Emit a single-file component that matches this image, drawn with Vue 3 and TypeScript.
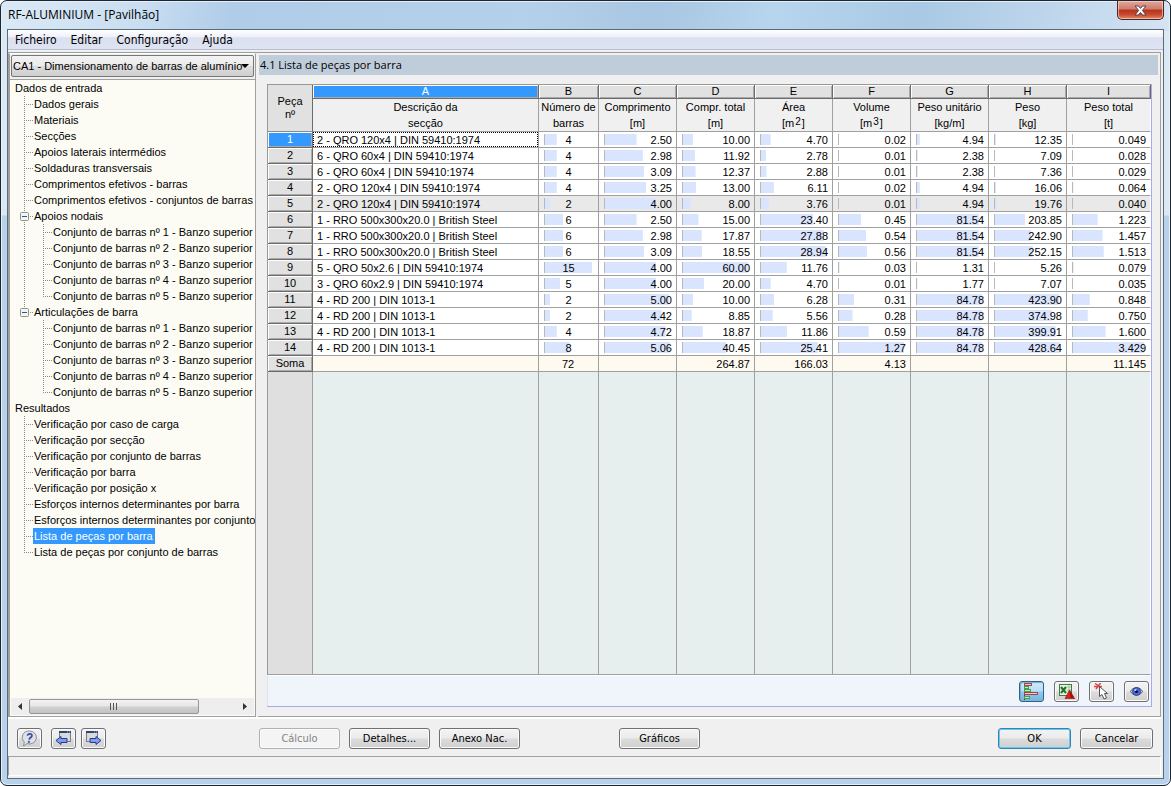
<script setup lang="ts">
import { ref } from 'vue'

interface TreeItem {
  label: string
  children?: TreeItem[]
}

interface Column {
  letter: string
  title: string
  unit: string
  power?: string
  kind: string
}

interface Piece {
  name: string
  values: string[]
}

const beams = [1, 2, 3, 4, 5].map((n) => ({ label: `Conjunto de barras nº ${n} - Banzo superior` }))

const tree: TreeItem[] = [
  {
    label: 'Dados de entrada',
    children: [
      { label: 'Dados gerais' },
      { label: 'Materiais' },
      { label: 'Secções' },
      { label: 'Apoios laterais intermédios' },
      { label: 'Soldaduras transversais' },
      { label: 'Comprimentos efetivos - barras' },
      { label: 'Comprimentos efetivos - conjuntos de barras' },
      { label: 'Apoios nodais', children: beams },
      { label: 'Articulações de barra', children: beams },
    ],
  },
  {
    label: 'Resultados',
    children: [
      { label: 'Verificação por caso de carga' },
      { label: 'Verificação por secção' },
      { label: 'Verificação por conjunto de barras' },
      { label: 'Verificação por barra' },
      { label: 'Verificação por posição x' },
      { label: 'Esforços internos determinantes por barra' },
      { label: 'Esforços internos determinantes por conjunto' },
      { label: 'Lista de peças por barra' },
      { label: 'Lista de peças por conjunto de barras' },
    ],
  },
]

const columns: Column[] = [
  { letter: 'A', title: 'Descrição da', unit: 'secção', kind: 'name' },
  { letter: 'B', title: 'Número de', unit: 'barras', kind: 'count' },
  { letter: 'C', title: 'Comprimento', unit: 'm', kind: 'num' },
  { letter: 'D', title: 'Compr. total', unit: 'm', kind: 'num' },
  { letter: 'E', title: 'Área', unit: 'm', power: '2', kind: 'num' },
  { letter: 'F', title: 'Volume', unit: 'm', power: '3', kind: 'num' },
  { letter: 'G', title: 'Peso unitário', unit: 'kg/m', kind: 'num' },
  { letter: 'H', title: 'Peso', unit: 'kg', kind: 'num' },
  { letter: 'I', title: 'Peso total', unit: 't', kind: 'last' },
]

const pieces: Piece[] = [
  { name: '2 - QRO 120x4 | DIN 59410:1974', values: ['4', '2.50', '10.00', '4.70', '0.02', '4.94', '12.35', '0.049'] },
  { name: '6 - QRO 60x4 | DIN 59410:1974', values: ['4', '2.98', '11.92', '2.78', '0.01', '2.38', '7.09', '0.028'] },
  { name: '6 - QRO 60x4 | DIN 59410:1974', values: ['4', '3.09', '12.37', '2.88', '0.01', '2.38', '7.36', '0.029'] },
  { name: '2 - QRO 120x4 | DIN 59410:1974', values: ['4', '3.25', '13.00', '6.11', '0.02', '4.94', '16.06', '0.064'] },
  { name: '2 - QRO 120x4 | DIN 59410:1974', values: ['2', '4.00', '8.00', '3.76', '0.01', '4.94', '19.76', '0.040'] },
  { name: '1 - RRO 500x300x20.0 | British Steel', values: ['6', '2.50', '15.00', '23.40', '0.45', '81.54', '203.85', '1.223'] },
  { name: '1 - RRO 500x300x20.0 | British Steel', values: ['6', '2.98', '17.87', '27.88', '0.54', '81.54', '242.90', '1.457'] },
  { name: '1 - RRO 500x300x20.0 | British Steel', values: ['6', '3.09', '18.55', '28.94', '0.56', '81.54', '252.15', '1.513'] },
  { name: '5 - QRO 50x2.6 | DIN 59410:1974', values: ['15', '4.00', '60.00', '11.76', '0.03', '1.31', '5.26', '0.079'] },
  { name: '3 - QRO 60x2.9 | DIN 59410:1974', values: ['5', '4.00', '20.00', '4.70', '0.01', '1.77', '7.07', '0.035'] },
  { name: '4 - RD 200 | DIN 1013-1', values: ['2', '5.00', '10.00', '6.28', '0.31', '84.78', '423.90', '0.848'] },
  { name: '4 - RD 200 | DIN 1013-1', values: ['2', '4.42', '8.85', '5.56', '0.28', '84.78', '374.98', '0.750'] },
  { name: '4 - RD 200 | DIN 1013-1', values: ['4', '4.72', '18.87', '11.86', '0.59', '84.78', '399.91', '1.600'] },
  { name: '4 - RD 200 | DIN 1013-1', values: ['8', '5.06', '40.45', '25.41', '1.27', '84.78', '428.64', '3.429'] },
]

const sums = ['', '72', '', '264.87', '166.03', '4.13', '', '', '11.145']
const maxima = sums.slice(1).map((_, i) => Math.max(...pieces.map((p) => Number(p.values[i]))))

const menus = ['Ficheiro', 'Editar', 'Configuração', 'Ajuda']
const current = ref('Lista de peças por barra')
const collapsed = ref<string[]>([])
const activeRow = ref(0)
const loadCase = ref('CA1')

function toggle(label: string) {
  collapsed.value = collapsed.value.includes(label)
    ? collapsed.value.filter((l) => l !== label)
    : [...collapsed.value, label]
}

function share(value: string, column: number) {
  return `${(Number(value) / maxima[column]) * 100}% 100%`
}
</script>

<template>
  <div class="window">
    <header class="titlebar">
      <h1>RF-ALUMINIUM - [Pavilhão]</h1>
      <button class="close" type="button" aria-label="Fechar">
        <svg width="13" height="11" viewBox="0 0 13 11">
          <path d="M1 1h3.4l2.1 2.4L8.6 1H12L8.4 5.4 12 10H8.6L6.5 7.500 4.400 10H1l3.600-4.600z" fill="#fff" stroke="#55404a" />
        </svg>
      </button>
    </header>

    <div class="client">
      <nav class="menubar">
        <button v-for="m in menus" :key="m" type="button">{{ m }}</button>
      </nav>

      <div class="main">
        <aside class="sidebar">
          <div class="combo">
            <select v-model="loadCase" aria-label="Caso de dimensionamento">
              <option value="CA1">CA1 - Dimensionamento de barras de alumínio</option>
            </select>
            <span class="arrow"></span>
          </div>
          <div class="navigator">
            <ul class="tree">
              <li v-for="root in tree" :key="root.label">
                <span class="root">{{ root.label }}</span>
                <ul class="branch">
                  <li v-for="item in root.children" :key="item.label">
                    <div class="line">
                      <button
                        v-if="item.children"
                        class="expander"
                        type="button"
                        :aria-label="item.label"
                        :aria-expanded="!collapsed.includes(item.label)"
                        @click="toggle(item.label)"
                      >
                        <svg width="9" height="9" viewBox="0 0 9 9">
                          <rect x=".5" y=".5" width="8" height="8" rx="1" fill="#f4f4f0" stroke="#919191" />
                          <path d="M2 4.500h5" stroke="#3450a0" />
                          <path v-if="collapsed.includes(item.label)" d="M4.500 2v5" stroke="#3450a0" />
                        </svg>
                      </button>
                      <button class="node" :class="{ on: item.label === current }" type="button" @click="current = item.label">
                        {{ item.label }}
                      </button>
                    </div>
                    <ul v-if="item.children && !collapsed.includes(item.label)" class="branch">
                      <li v-for="leaf in item.children" :key="leaf.label">
                        <div class="line">
                          <button class="node" type="button">{{ leaf.label }}</button>
                        </div>
                      </li>
                    </ul>
                  </li>
                </ul>
              </li>
            </ul>
            <div class="scroll">
              <button type="button" aria-label="Deslocar para a esquerda">
                <svg width="4" height="7" viewBox="0 0 4 7"><path d="M4 0v7L0 3.500z" fill="#333" /></svg>
              </button>
              <div class="track">
                <div class="thumb"><i></i><i></i><i></i></div>
              </div>
              <button type="button" aria-label="Deslocar para a direita">
                <svg width="4" height="7" viewBox="0 0 4 7"><path d="M0 0v7l4-3.500z" fill="#333" /></svg>
              </button>
            </div>
          </div>
        </aside>

        <section class="panel">
          <h2>4.1 Lista de peças por barra</h2>
          <div class="sheet">
            <table>
              <colgroup>
                <col class="w-head" />
                <col v-for="c in columns" :key="c.letter" :class="'w-' + c.kind" />
              </colgroup>
              <thead>
                <tr class="letters">
                  <th rowspan="2" class="corner">Peça<br />nº</th>
                  <th v-for="c in columns" :key="c.letter" :class="{ active: c.letter === 'A' }">{{ c.letter }}</th>
                </tr>
                <tr class="titles">
                  <th v-for="c in columns" :key="c.letter">
                    {{ c.title }}<br />
                    <template v-if="c.kind === 'name' || c.kind === 'count'">{{ c.unit }}</template>
                    <template v-else>[{{ c.unit }}<sup v-if="c.power">{{ c.power }}</sup>]</template>
                  </th>
                </tr>
              </thead>
              <tbody>
                <tr v-for="(p, i) in pieces" :key="i" :class="{ shaded: i === 4, active: i === activeRow }" @click="activeRow = i">
                  <th scope="row">{{ i + 1 }}</th>
                  <td class="name"><span>{{ p.name }}</span></td>
                  <td v-for="(v, k) in p.values" :key="k" :class="k === 0 ? 'count' : 'num'">
                    <div class="bar" :style="{ backgroundSize: share(v, k) }"><span>{{ v }}</span></div>
                  </td>
                </tr>
                <tr class="sum">
                  <th scope="row">Soma</th>
                  <td v-for="(s, k) in sums" :key="k" :class="k === 1 ? 'count' : 'num'">
                    <div class="plain"><span>{{ s }}</span></div>
                  </td>
                </tr>
                <tr class="rest">
                  <td></td>
                  <td v-for="c in columns" :key="c.letter"></td>
                </tr>
              </tbody>
            </table>
            <div class="tools">
              <button class="icon pressed" type="button" aria-label="Barras relativas">
                <svg width="19" height="17" viewBox="0 0 19 17">
                  <path d="M2.500 0v17" stroke="#3d4a55" />
                  <rect x="2.500" y=".5" width="7" height="2" fill="#f6c4c4" stroke="#a04848" />
                  <rect x="2.500" y="3.500" width="4" height="2" fill="#c8ecc4" stroke="#4d9b50" />
                  <rect x="2.500" y="6.500" width="6" height="2" fill="#c8ecc4" stroke="#4d9b50" />
                  <rect x="2.500" y="9.500" width="13" height="2" fill="#f6c4c4" stroke="#a04848" />
                  <rect x="2.500" y="13.500" width="5" height="2" fill="#c8ecc4" stroke="#4d9b50" />
                </svg>
              </button>
              <button class="icon" type="button" aria-label="Exportar para Excel">
                <svg width="17" height="17" viewBox="0 0 17 17">
                  <rect x="1.500" y="1.500" width="12" height="11" fill="#eef7ea" stroke="#3d7d3f" />
                  <path d="M8 4h5M8 7h5M8 10h5M11 2v10" stroke="#9fc39d" />
                  <path d="M2 3h7v8H2z" fill="#dff0d8" />
                  <path d="M3 4l5 6M8 4l-5 6" stroke="#23742b" stroke-width="2" />
                  <path d="M11.500 7L16.500 15.500H7z" fill="#e02020" stroke="#861212" stroke-width=".6" />
                  <path d="M11.500 7L16.500 15.500l-4-.5z" fill="#a50f0f" />
                </svg>
              </button>
              <button class="icon" type="button" aria-label="Selecionar no gráfico">
                <svg width="17" height="17" viewBox="0 0 17 17">
                  <path d="M2 0.500l6 4M7.500 0L3 6M1 3.500h8" stroke="#dd4a45" stroke-width="1.500" />
                  <path d="M6.500 3.500v10l2.500-2 2 4.500 2.500-1-2-4.500h3z" fill="#fff" stroke="#555" />
                </svg>
              </button>
              <button class="icon" type="button" aria-label="Visualizar">
                <svg width="17" height="17" viewBox="0 0 17 17">
                  <path d="M2.500 8.500C4.500 3.500 12.500 3.500 14.500 8.500 12.500 13 4.500 13 2.500 8.500z" fill="#c9cfdd" stroke="#555b66" />
                  <circle cx="8.500" cy="8.500" r="4" fill="#4a6ce0" stroke="#2a3a80" stroke-width=".8" />
                  <circle cx="8.500" cy="8.500" r="1.600" fill="#0b1230" />
                  <circle cx="7.500" cy="7" r="1" fill="#cfe0ff" />
                </svg>
              </button>
            </div>
          </div>
        </section>
      </div>

      <footer class="actions">
        <div class="left">
          <button class="icon help" type="button" aria-label="Ajuda">
            <svg width="17" height="17" viewBox="0 0 17 17">
              <path d="M8.500 1a7 6.500 0 1 1-2.500 12.600L2.500 16l.8-3.800A7 6.500 0 0 1 8.500 1z" fill="#dfe2e8" stroke="#8b9097" />
              <path d="M6.500 5.600C6.800 3.200 11.400 3.100 10.900 5.800 10.600 7.500 8.400 7.600 8.200 9.600" fill="none" stroke="#3a4f9d" stroke-width="1.800" />
              <circle cx="7.900" cy="11.800" r="1.100" fill="#3a4f9d" />
            </svg>
          </button>
          <button class="icon" type="button" aria-label="Anterior">
            <svg width="17" height="17" viewBox="0 0 17 17">
              <rect x="4.500" y="1.500" width="11" height="10" fill="#d9dadd" stroke="#777d88" />
              <path d="M4 2h12" stroke="#35446e" stroke-width="2" />
              <path d="M12 2h1M14 2h1" stroke="#9db4ee" />
              <path d="M1 10.500L6 6.500v2h6v4H6v2z" fill="#7f9df0" stroke="#263a86" />
            </svg>
          </button>
          <button class="icon" type="button" aria-label="Seguinte">
            <svg width="17" height="17" viewBox="0 0 17 17">
              <rect x="1.500" y="1.500" width="11" height="10" fill="#d9dadd" stroke="#777d88" />
              <path d="M1 2h12" stroke="#35446e" stroke-width="2" />
              <path d="M9 2h1M11 2h1" stroke="#9db4ee" />
              <path d="M16 10.500L11 6.500v2H5v4h6v2z" fill="#7f9df0" stroke="#263a86" />
            </svg>
          </button>
        </div>
        <div class="group">
          <button class="push" type="button" disabled>Cálculo</button>
          <button class="push" type="button">Detalhes...</button>
          <button class="push" type="button">Anexo Nac.</button>
        </div>
        <button class="push charts" type="button">Gráficos</button>
        <div class="group end">
          <button class="push small default" type="button">OK</button>
          <button class="push small" type="button">Cancelar</button>
        </div>
      </footer>
      <div class="status"></div>
    </div>
  </div>
</template>

<style>
body {
  margin: 0;
  background: #fff;
}
</style>

<style scoped>
* {
  box-sizing: border-box;
}

.window {
  display: flex;
  flex-direction: column;
  min-height: 100vh;
  padding: 0 6px 6px;
  border: 1px solid #1d262f;
  border-radius: 7px;
  box-shadow: inset 0 0 0 1px #e4f1fb;
  background:
    linear-gradient(180deg, rgba(255, 255, 255, 0.5) 0, rgba(255, 255, 255, 0.5) 184px, transparent 185px) 0 30px / 7px 100% no-repeat,
    linear-gradient(180deg, rgba(255, 255, 255, 0.5) 0, rgba(255, 255, 255, 0.5) 184px, transparent 185px) 100% 30px / 7px 100% no-repeat,
    linear-gradient(100deg, #dbe9f6 0, #c9def1 12%, #b0cce8 20%, #b5d0ea 45%, #a9c6e2 56%, #b8d5ee 66%, #a9c9e4 78%, #bfd6ec 90%, #d5e4f3 100%) 0 0 / 100% 30px no-repeat,
    #b7d2ea;
  color: #000;
  font: 11px/16px "Liberation Sans", Arial, sans-serif;
}

button,
select {
  margin: 0;
  color: inherit;
  font: inherit;
}

.titlebar {
  display: flex;
  justify-content: space-between;
  align-items: flex-start;
  height: 28px;
}

h1 {
  margin: 6px 0 0 1px;
  font: 12px/16px "Open Sans", sans-serif;
}

.close {
  display: grid;
  place-items: center;
  width: 47px;
  height: 19px;
  padding: 0;
  border: 1px solid #4c2328;
  border-top: 0;
  border-radius: 0 0 5px 5px;
  box-shadow: inset 0 0 0 1px rgba(255, 220, 210, 0.6);
  background: linear-gradient(#e3a79b 0, #cf7b6b 45%, #b5331c 50%, #c8492f 75%, #de8a68 100%);
}

.client {
  display: flex;
  flex: 1;
  flex-direction: column;
  border: 1px solid #5c6a78;
  background: #f0f0f0;
}

.menubar {
  display: flex;
  gap: 14px;
  height: 20px;
  padding-left: 7px;
  border-bottom: 1px solid #b9bfd0;
  background: linear-gradient(#fff 0, #eef0f8 38%, #dbe0f1 40%, #dfe4f3 100%);
}

.menubar button {
  padding: 0;
  border: 0;
  background: none;
  font: 12px/20px "DejaVu Sans Condensed", "DejaVu Sans", sans-serif;
}

.main {
  display: flex;
  flex: 1;
  margin: 2px 2px 0 0;
  border-top: 1px solid #9d9d9d;
  box-shadow: 0 2px #fff;
}

.sidebar {
  display: flex;
  flex: none;
  flex-direction: column;
  width: 248px;
  border: 1px solid #a0a0a0;
  border-top-color: #fff;
  border-left-width: 2px;
}

.combo {
  display: grid;
  grid-template-columns: 1fr 16px;
  align-items: center;
  margin: 1px 1px 2px;
  border: 1px solid #777;
  border-radius: 2px;
  background: linear-gradient(#f3f3f3 0, #ebebeb 48%, #dcdcdc 52%, #cfcfcf 100%);
}

.combo select {
  grid-area: 1 / 1 / 2 / 3;
  width: 100%;
  height: 20px;
  padding: 0 0 0 1px;
  border: 0;
  appearance: none;
  background: none;
}

.arrow {
  grid-area: 1 / 2;
  justify-self: center;
  border: 4px solid transparent;
  border-top-color: #000;
  border-bottom: 0;
  pointer-events: none;
}

.navigator {
  display: flex;
  flex: 1;
  flex-direction: column;
  min-height: 0;
  border-top: 1px solid #a0a0a0;
  background: #fcfcf4;
}

.tree {
  flex: 1;
  overflow: hidden;
}

.tree,
.branch {
  margin: 0;
  padding: 0;
  list-style: none;
}

.root {
  display: block;
  padding-left: 5px;
}

.tree > li > .branch {
  margin-left: 14px;
}

.branch > li {
  padding-left: 9px;
  background:
    repeating-linear-gradient(180deg, #8a8a8a 0 1px, transparent 1px 2px) 0 0 / 1px 100% no-repeat,
    repeating-linear-gradient(90deg, #8a8a8a 0 1px, transparent 1px 2px) 0 8px / 9px 1px no-repeat;
}

.branch > li:last-child {
  background-size: 1px 8px, 9px 1px;
}

.branch .branch {
  margin-left: 10px;
}

.line {
  display: flex;
  align-items: center;
  height: 16px;
}

.expander {
  display: block;
  width: 9px;
  height: 9px;
  margin: 0 4px 0 -13px;
  padding: 0;
  border: 0;
  background: none;
}

.expander svg {
  display: block;
}

.node {
  padding: 0 1px;
  border: 0;
  background: none;
  line-height: 16px;
  white-space: nowrap;
}

.node.on {
  padding-right: 2px;
  background: #3399ff;
  color: #fff;
}

.scroll {
  display: flex;
  height: 17px;
  margin: 0 1px 1px;
  background: #eee;
}

.scroll button {
  display: grid;
  place-items: center;
  width: 18px;
  padding: 0;
  border: 0;
  background: none;
}

.track {
  flex: 1;
}

.thumb {
  display: flex;
  gap: 1px;
  justify-content: center;
  align-items: center;
  width: 82%;
  height: 15px;
  margin-top: 1px;
  border: 1px solid #979797;
  border-radius: 2px;
  background: linear-gradient(#f3f3f3 0, #e6e6e6 48%, #d2d2d2 52%, #c2c2c2 100%);
}

.thumb i {
  width: 2px;
  height: 7px;
  border-left: 1px solid #555;
}

.panel {
  display: flex;
  flex: 1;
  flex-direction: column;
  min-width: 0;
  margin-left: 2px;
  padding: 2px 2px 0 1px;
  border: solid #a0a0a0;
  border-width: 0 1px 1px 0;
}

h2 {
  margin: 0;
  padding-left: 1px;
  background: #bfccda;
  font: 11px/20px "Open Sans", "DejaVu Sans", sans-serif;
}

.sheet {
  display: flex;
  flex: 1;
  flex-direction: column;
  margin: 9px 6px 9px 8px;
  border: solid #a9a9f0;
  border-width: 0 1px 1px 0;
  background: #f0f4fb;
}

table {
  flex: 1;
  width: 100%;
  table-layout: fixed;
  border-spacing: 0;
  border-top: 1px solid #999;
  border-left: 1px solid #999;
  background: #e6eeee;
  line-height: 15px;
}

.w-head { width: 45px; }
.w-count { width: 60px; }
.w-num { width: 78px; }
.w-last { width: 84px; }

th,
td {
  padding: 0;
  border: solid #a0a0a0;
  border-width: 0 1px 1px 0;
  font-weight: normal;
  white-space: nowrap;
}

tr > :last-child {
  border-right-color: #fff;
}

.letters th {
  height: 14px;
  border-color: #6b6b6b;
  box-shadow: inset 1px 1px #fff, inset -1px -1px #aaa;
  background: #e1e1e1;
  line-height: 13px;
}

.letters .corner {
  border-bottom-color: #8a8a8a;
  box-shadow: none;
}

.letters .active {
  background: #3399ff;
  color: #fff;
}

.titles th {
  height: 33px;
  background: #f0f0f0;
  line-height: 16px;
}

sup {
  padding: 0 1px;
  font-size: 10px;
  line-height: 1px;
  vertical-align: 2px;
}

tbody th {
  height: 16px;
  border-color: #6b6b6b;
  box-shadow: inset 1px 1px #fff, inset -1px -1px #aaa;
  background: #e1e1e1;
}

tbody td {
  height: 16px;
  background: #fff;
}

.active th {
  background: #3399ff;
  color: #fff;
}

.shaded td {
  background: #e9e9e9;
}

.sum td {
  background: #fffaf0;
}

.name span {
  display: block;
  height: 15px;
  padding: 0 3px;
  border: 1px solid transparent;
  line-height: 14px;
}

.active .name span {
  border: 1px dotted #000;
}

.bar,
.plain {
  height: 11px;
  margin: 0 6px 0 5px;
  line-height: 12px;
}

.bar {
  border-left: 1px solid #b8b8b8;
  background: linear-gradient(#d9e4ff, #d9e4ff) no-repeat;
  background-origin: border-box;
}

.num {
  text-align: right;
}

.num span {
  margin-right: -2px;
}

.count {
  text-align: center;
}

.rest td {
  height: auto;
  background: #e6eeee;
}

.rest td:first-child {
  background: #dfdfdf;
}

.tools {
  display: flex;
  gap: 10px;
  justify-content: flex-end;
  padding: 5px 2px 4px;
  border-top: 1px solid #fff;
  border-left: 1px solid #dde3f0;
}

.icon,
.push {
  border: 1px solid #707070;
  border-radius: 3px;
  box-shadow: inset 0 0 0 1px #fafafa;
  background: linear-gradient(#f3f3f3 0, #ebebeb 48%, #dcdcdc 52%, #cfcfcf 100%);
}

.push {
  width: 81px;
  height: 21px;
  padding: 0;
  font-family: "DejaVu Sans Condensed", "DejaVu Sans", sans-serif;
}

.icon {
  display: grid;
  place-items: center;
  width: 25px;
  height: 21px;
  padding: 0;
}

.pressed {
  border-color: #2c628b;
  box-shadow: inset 1px 1px 1px #7fa9c4;
  background: linear-gradient(#d0e9f8 0, #b9dff5 48%, #8fc9ec 52%, #76b5dc 100%);
}

.actions {
  display: flex;
  align-items: flex-start;
  padding: 11px 10px 7px 9px;
}

.left {
  display: flex;
  gap: 5px;
  width: 242px;
}

.help {
  margin-right: 4px;
}

.group {
  display: flex;
  gap: 9px;
}

.end {
  margin-left: auto;
}

.small {
  width: 73px;
}

.charts {
  margin-left: 99px;
}

.push:disabled {
  border-color: #adb2b5;
  background: #f4f4f4;
  color: #838383;
}

.default {
  border-color: #3c7fb1;
  box-shadow: inset 0 0 0 1px #5fcdf2;
}

.status {
  height: 20px;
  margin: 0 2px 2px 0;
  border: 1px solid #a0a0a0;
  border-right-color: #fff;
  border-bottom-color: #fff;
}
</style>
